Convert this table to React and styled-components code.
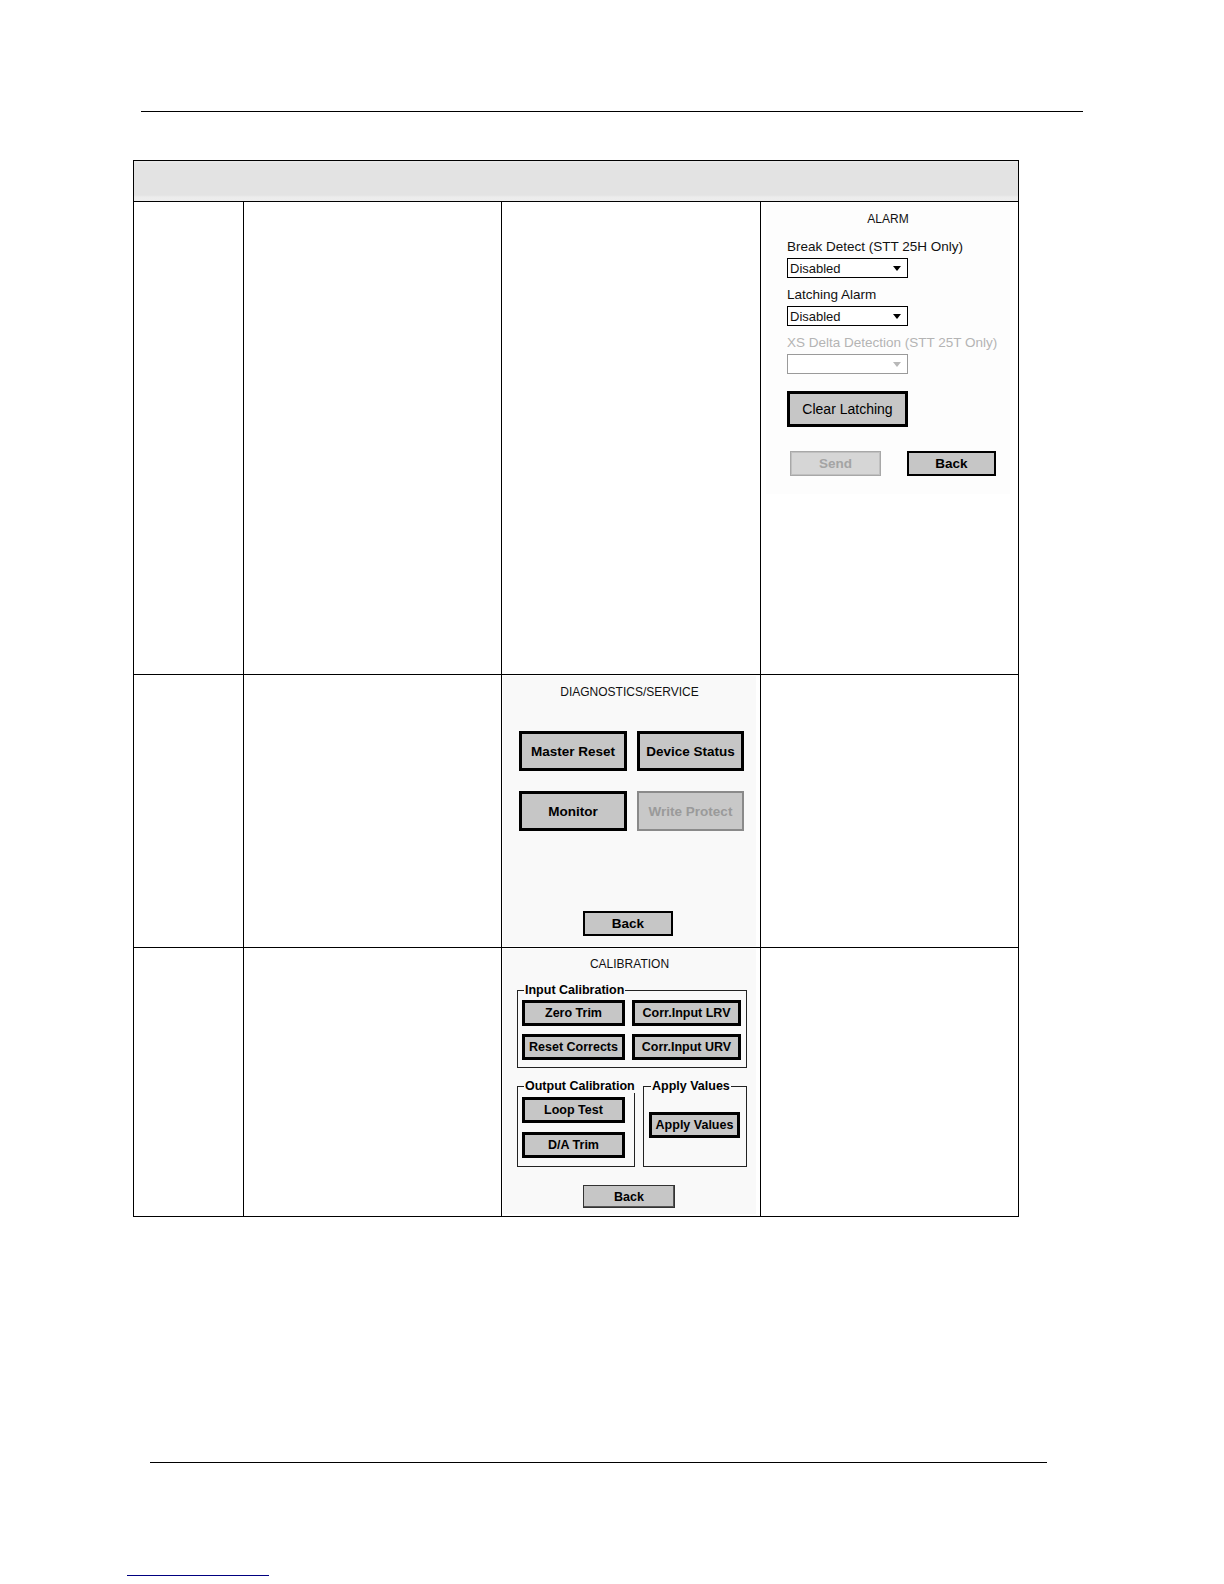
import React from "react";
import styled, { createGlobalStyle, css } from "styled-components";

const GlobalStyle = createGlobalStyle`
  html, body { margin: 0; padding: 0; background: #ffffff; }
  body { font-family: "Liberation Sans", Arial, sans-serif; color: #000; }
  * { box-sizing: border-box; }
`;

const Page = styled.div`
  width: 1224px;
  min-height: 1584px;
  display: flex;
  flex-direction: column;
  align-items: flex-start;
  overflow: hidden;
`;

const Rule = styled.div`
  height: 1px;
  background: ${(p) => p.$color || "#000"};
  width: ${(p) => p.$width}px;
  margin-left: ${(p) => p.$left}px;
  margin-top: ${(p) => p.$top}px;
`;

const Table = styled.div`
  margin: 48px 0 0 133px;
  width: 886px;
  display: grid;
  grid-template-columns: 110px 258px 259px 258px;
  grid-template-rows: 41px 473px 273px 269px;
  border-left: 1px solid #000;
  border-top: 1px solid #000;
`;

const Cell = styled.div`
  border-right: 1px solid #000;
  border-bottom: 1px solid #000;
  display: flex;
  flex-direction: column;
  min-width: 0;
`;

const HeaderCell = styled(Cell)`
  grid-column: 1 / -1;
  background: linear-gradient(
    to bottom,
    #e9e9e9 0px,
    #e3e3e3 3px,
    #e3e3e3 34px,
    #ececec 36px,
    #ededed 100%
  );
`;

const Panel = styled.div`
  background: ${(p) => p.$bg || "#f9f9f9"};
  display: flex;
  flex-direction: column;
  align-items: flex-start;
  margin: ${(p) => p.$margin};
  padding: ${(p) => p.$padding};
  height: ${(p) => p.$height || "auto"};
`;

const Title = styled.div`
  font-size: 12px;
  line-height: 15px;
  color: #111;
  align-self: center;
  margin-left: ${(p) => p.$shift || 0}px;
`;

const Label = styled.div`
  font-size: 13.5px;
  line-height: 16px;
  color: ${(p) => (p.$disabled ? "#b4b4b4" : "#111")};
  margin: ${(p) => p.$margin || "0 0 3px 0"};
  white-space: nowrap;
`;

const SelectBox = styled.div`
  width: 121px;
  height: 20px;
  border: 1px solid ${(p) => (p.$disabled ? "#9a9a9a" : "#000")};
  background: #fff;
  display: flex;
  align-items: center;
  justify-content: space-between;
  padding: 0 6px 0 2px;
  font-size: 13px;
  color: #111;
  margin-bottom: 9px;
`;

const Arrow = styled.span`
  width: 0;
  height: 0;
  border-left: 4px solid transparent;
  border-right: 4px solid transparent;
  border-top: 5px solid ${(p) => (p.$disabled ? "#b8b8b8" : "#000")};
`;

const buttonVariants = {
  thick: css`
    border: 3px solid #000;
    background: #c6c6c6;
    color: #000;
  `,
  medium: css`
    border: 2px solid #000;
    background: #c6c6c6;
    color: #000;
  `,
  thin: css`
    border: 1px solid #333;
    box-shadow: inset -1px -1px 0 #555;
    background: #c6c6c6;
    color: #000;
  `,
  disabled: css`
    border: 1px solid #a8a8a8;
    box-shadow: inset 0 0 0 1px #c0c0c0;
    background: #d6d6d6;
    color: #a4a4a4;
  `,
  disabledGrey: css`
    border: 2px solid #8a8a8a;
    background: #c8c8c8;
    color: #9a9a9a;
  `,
};

const Button = styled.div`
  width: ${(p) => p.$w}px;
  height: ${(p) => p.$h}px;
  display: flex;
  align-items: center;
  justify-content: center;
  font-size: ${(p) => p.$size || 13.5}px;
  font-weight: ${(p) => (p.$regular ? 400 : 700)};
  white-space: nowrap;
  margin: ${(p) => p.$margin || "0"};
  flex-shrink: 0;
  ${(p) => buttonVariants[p.$variant || "thick"]}
`;

const ButtonRow = styled.div`
  display: flex;
  gap: ${(p) => p.$gap}px;
  margin: ${(p) => p.$margin || "0"};
`;

const ButtonGrid = styled.div`
  display: grid;
  grid-template-columns: ${(p) => p.$cols};
  grid-auto-rows: ${(p) => p.$rowH}px;
  column-gap: ${(p) => p.$colGap}px;
  row-gap: ${(p) => p.$rowGap}px;
  margin: ${(p) => p.$margin || "0"};
`;

const Group = styled.fieldset`
  margin: ${(p) => p.$margin || "0"};
  min-width: 0;
  border: 1px solid #222;
  width: ${(p) => p.$w}px;
  padding: ${(p) => p.$padding};
  display: flex;
  flex-direction: column;
  gap: ${(p) => p.$gap || 0}px;
`;

const Legend = styled.legend`
  font-size: 12.5px;
  line-height: 14px;
  font-weight: 700;
  padding: 0 1px;
  margin-left: 2px;
  white-space: nowrap;
`;

const GroupRow = styled.div`
  display: flex;
  gap: 8px;
  margin: 11px 0 0 14px;
`;

function Select({ value, disabled }) {
  return (
    <SelectBox $disabled={disabled}>
      <span>{value}</span>
      <Arrow $disabled={disabled} />
    </SelectBox>
  );
}

function AlarmPanel() {
  return (
    <Panel
      $bg="#fdfdfd"
      $margin="2px 8px 0 5px"
      $padding="8px 0 16px 21px"
      $height="290px"
    >
      <Title $shift={-21}>ALARM</Title>
      <Label $margin="12px 0 3px 0">Break Detect (STT 25H Only)</Label>
      <Select value="Disabled" />
      <Label>Latching Alarm</Label>
      <Select value="Disabled" />
      <Label $disabled>XS Delta Detection (STT 25T Only)</Label>
      <Select value="" disabled />
      <Button $w={121} $h={36} $size={14} $regular $margin="8px 0 0 0">
        Clear Latching
      </Button>
      <ButtonRow $gap={26} $margin="24px 0 0 3px">
        <Button $w={91} $h={25} $variant="disabled">Send</Button>
        <Button $w={89} $h={25} $variant="medium">Back</Button>
      </ButtonRow>
    </Panel>
  );
}

function DiagnosticsPanel() {
  return (
    <Panel $margin="1px 4px 1px 1px" $padding="9px 0 0 16px" $height="270px">
      <Title $shift={-16}>DIAGNOSTICS/SERVICE</Title>
      <ButtonGrid
        $cols="108px 107px"
        $rowH={40}
        $colGap={10}
        $rowGap={20}
        $margin="31px 0 0 0"
      >
        <Button $w={108} $h={40}>Master Reset</Button>
        <Button $w={107} $h={40}>Device Status</Button>
        <Button $w={108} $h={40}>Monitor</Button>
        <Button $w={107} $h={40} $variant="disabledGrey">Write Protect</Button>
      </ButtonGrid>
      <Button $w={90} $h={25} $variant="medium" $margin="80px 0 0 64px">
        Back
      </Button>
    </Panel>
  );
}

function CalibrationPanel() {
  return (
    <Panel $margin="1px 4px 1px 1px" $padding="8px 0 0 0" $height="265px">
      <Title>CALIBRATION</Title>
      <Group $w={230} $padding="3px 4px 7px 4px" $margin="11px 0 0 14px">
        <Legend>Input Calibration</Legend>
        <ButtonGrid $cols="103px 109px" $rowH={26} $colGap={7} $rowGap={8}>
          <Button $w={103} $h={26} $size={12.5}>Zero Trim</Button>
          <Button $w={109} $h={26} $size={12.5}>Corr.Input LRV</Button>
          <Button $w={103} $h={26} $size={12.5}>Reset Corrects</Button>
          <Button $w={109} $h={26} $size={12.5}>Corr.Input URV</Button>
        </ButtonGrid>
      </Group>
      <GroupRow>
        <Group $w={118} $padding="4px 4px 8px 4px" $gap={9}>
          <Legend>Output Calibration</Legend>
          <Button $w={103} $h={26} $size={12.5}>Loop Test</Button>
          <Button $w={103} $h={26} $size={12.5}>D/A Trim</Button>
        </Group>
        <Group $w={104} $padding="19px 4px 8px 5px">
          <Legend>Apply Values</Legend>
          <Button $w={91} $h={26} $size={12.5}>Apply Values</Button>
        </Group>
      </GroupRow>
      <Button
        $w={92}
        $h={23}
        $size={12.5}
        $variant="thin"
        $margin="18px 0 0 80px"
      >
        Back
      </Button>
    </Panel>
  );
}

export default function App() {
  return (
    <>
      <GlobalStyle />
      <Page>
        <Rule $top={111} $left={141} $width={942} />
        <Table>
          <HeaderCell />
          <Cell />
          <Cell />
          <Cell />
          <Cell>
            <AlarmPanel />
          </Cell>
          <Cell />
          <Cell />
          <Cell>
            <DiagnosticsPanel />
          </Cell>
          <Cell />
          <Cell />
          <Cell />
          <Cell>
            <CalibrationPanel />
          </Cell>
          <Cell />
        </Table>
        <Rule $top={245} $left={150} $width={897} />
        <Rule $top={112} $left={127} $width={142} $color="#000080" />
      </Page>
    </>
  );
}
